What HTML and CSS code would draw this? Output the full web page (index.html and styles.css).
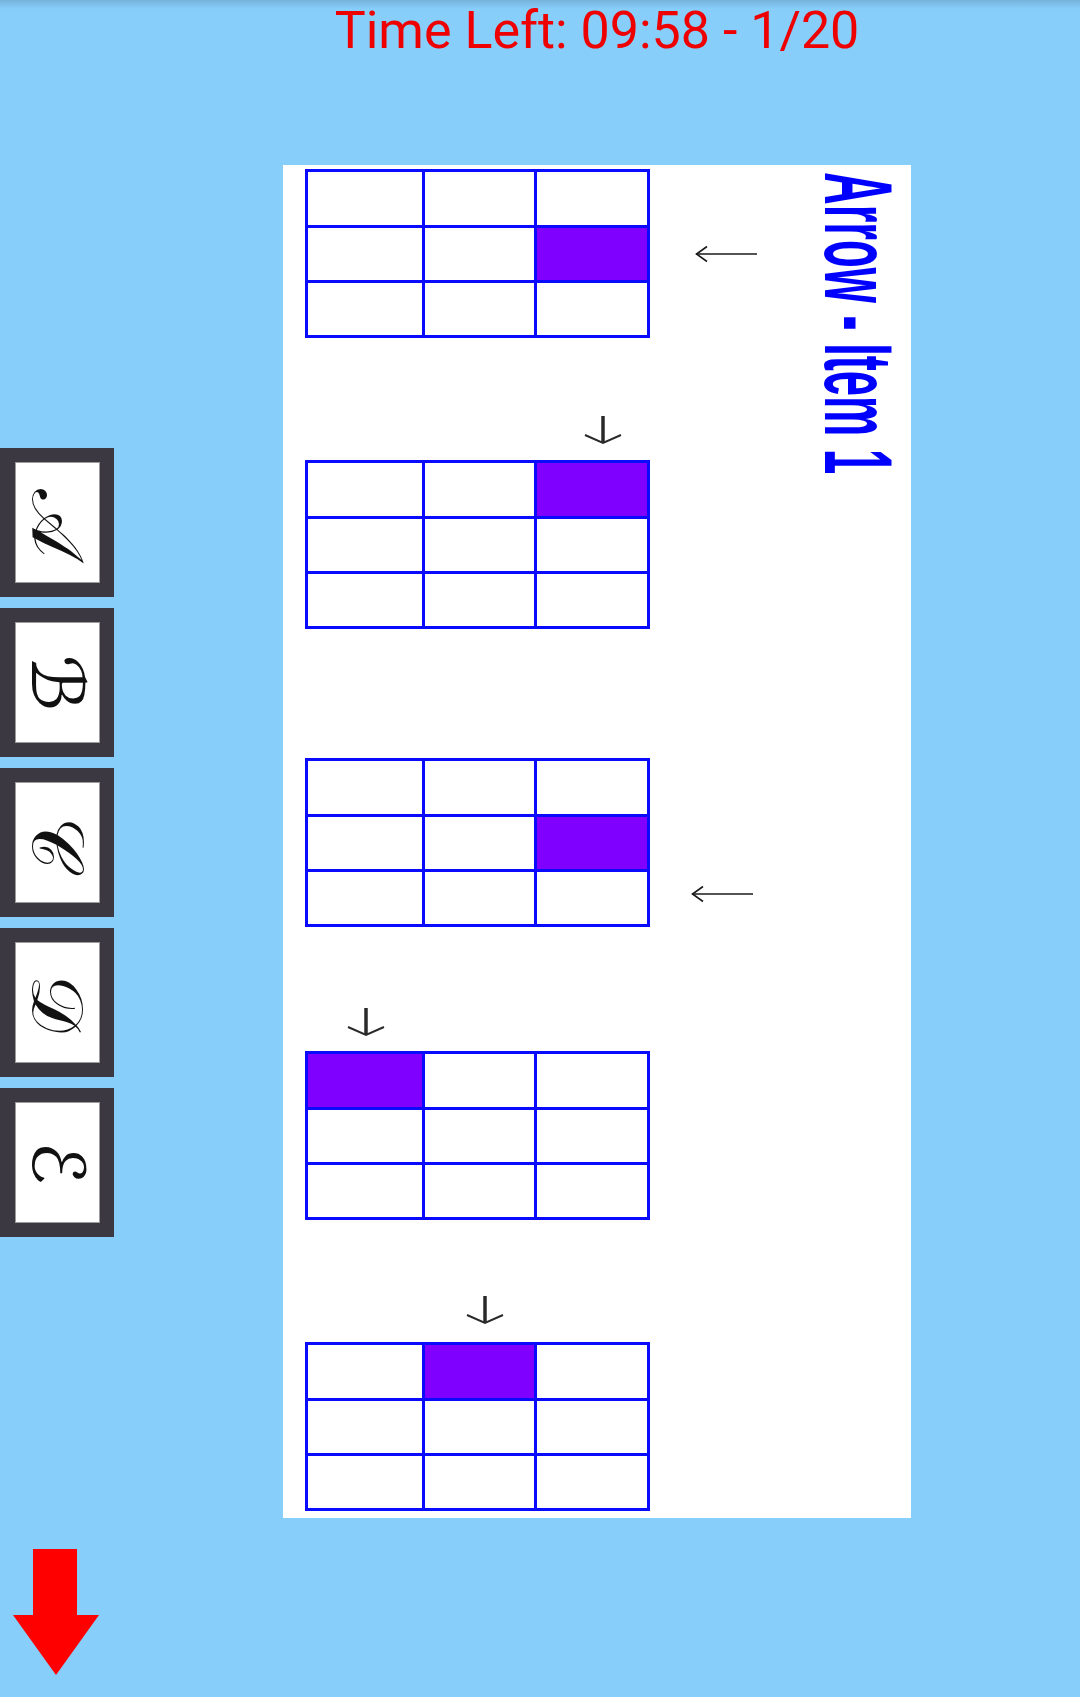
FILE: index.html
```
<!DOCTYPE html>
<html lang="en">
<head>
<meta charset="utf-8">
<title>Arrow - Item 1</title>
<link rel="stylesheet" href="styles.css">
</head>
<body>
<div class="app">
  <aside class="side">
    <div class="choices">
      <div class="choice"><div class="choice-face"><span class="glyph">𝒜</span></div></div>
      <div class="choice"><div class="choice-face"><span class="glyph">ℬ</span></div></div>
      <div class="choice"><div class="choice-face"><span class="glyph">𝒞</span></div></div>
      <div class="choice"><div class="choice-face"><span class="glyph">𝒟</span></div></div>
      <div class="choice"><div class="choice-face"><span class="glyph">ℰ</span></div></div>
    </div>
    <svg class="next" width="86" height="126" viewBox="0 0 86 126">
      <polygon points="20,0 64,0 64,66 86,66 43,126 0,66 20,66" fill="#ff0000"/>
    </svg>
  </aside>
  <main class="main">
    <div class="timer">Time Left: 09:58 - 1/20</div>
    <div class="panel">
      <div class="panel-title">Arrow - Item 1</div>
      <div class="items">
        <div class="item">
          <div class="grid">
            <div class="cell"></div><div class="cell"></div><div class="cell"></div>
            <div class="cell"></div><div class="cell"></div><div class="cell on"></div>
            <div class="cell"></div><div class="cell"></div><div class="cell"></div>
          </div>
          <svg class="arrow arrow-left a1" viewBox="0 0 62 18"><line x1="1" y1="9" x2="62" y2="9"/><polyline points="12,1.5 1.5,9 12,16.5"/></svg>
        </div>
        <div class="item">
          <div class="grid">
            <div class="cell"></div><div class="cell"></div><div class="cell on"></div>
            <div class="cell"></div><div class="cell"></div><div class="cell"></div>
            <div class="cell"></div><div class="cell"></div><div class="cell"></div>
          </div>
          <svg class="arrow arrow-down a2" viewBox="0 0 38 28"><line class="stem" x1="19" y1="0" x2="19" y2="27"/><polyline points="1,19 19,27 37,19"/></svg>
        </div>
        <div class="item item-wide">
          <div class="grid">
            <div class="cell"></div><div class="cell"></div><div class="cell"></div>
            <div class="cell"></div><div class="cell"></div><div class="cell on"></div>
            <div class="cell"></div><div class="cell"></div><div class="cell"></div>
          </div>
          <svg class="arrow arrow-left a3" viewBox="0 0 62 18"><line x1="1" y1="9" x2="62" y2="9"/><polyline points="12,1.5 1.5,9 12,16.5"/></svg>
        </div>
        <div class="item item-mid">
          <div class="grid">
            <div class="cell on"></div><div class="cell"></div><div class="cell"></div>
            <div class="cell"></div><div class="cell"></div><div class="cell"></div>
            <div class="cell"></div><div class="cell"></div><div class="cell"></div>
          </div>
          <svg class="arrow arrow-down a4" viewBox="0 0 38 28"><line class="stem" x1="19" y1="0" x2="19" y2="27"/><polyline points="1,19 19,27 37,19"/></svg>
        </div>
        <div class="item">
          <div class="grid">
            <div class="cell"></div><div class="cell on"></div><div class="cell"></div>
            <div class="cell"></div><div class="cell"></div><div class="cell"></div>
            <div class="cell"></div><div class="cell"></div><div class="cell"></div>
          </div>
          <svg class="arrow arrow-down a5" viewBox="0 0 38 28"><line class="stem" x1="19" y1="0" x2="19" y2="27"/><polyline points="1,19 19,27 37,19"/></svg>
        </div>
      </div>
    </div>
  </main>
</div>
</body>
</html>
```
FILE: styles.css
```
* { box-sizing: border-box; }
html, body { margin: 0; padding: 0; }
body {
  width: 1080px;
  height: 1697px;
  overflow: hidden;
  background: linear-gradient(to bottom, #76b2da 0, #87cefa 9px) #87cefa;
  font-family: Roboto, "Liberation Sans", sans-serif;
}
.app { display: flex; height: 1697px; }

.side {
  width: 114px;
  flex: none;
  display: flex;
  flex-direction: column;
  padding-top: 448px;
}
.choices { display: flex; flex-direction: column; gap: 11px; }
.choice {
  height: 149px;
  background: #3c3842;
  padding: 14px 0 0 15px;
}
.choice-face {
  width: 85px;
  height: 121px;
  background: #fff;
  border: 1px solid #9b9b9b;
  display: flex;
  align-items: center;
  justify-content: center;
  overflow: hidden;
}
.glyph {
  display: inline-block;
  transform: rotate(90deg);
  font-family: "DejaVu Serif", "DejaVu Sans", serif;
  font-size: 72px;
  line-height: 1;
  color: #111;
}
.next { display: block; margin: auto 0 22px 13px; }

.main {
  flex: 1;
  display: flex;
  flex-direction: column;
  align-items: center;
}
.timer {
  font-size: 52px;
  line-height: 52px;
  padding-top: 5px;
  color: #ee0000;
  white-space: nowrap;
}
.panel {
  margin-top: 108px;
  width: 628px;
  height: 1353px;
  background: #fff;
  position: relative;
}
.panel-title {
  position: absolute;
  left: 623px;
  top: 7px;
  transform-origin: 0 0;
  transform: rotate(90deg) scaleX(0.472);
  font: bold 96px/1 "Liberation Sans", Arial, sans-serif;
  color: #0000ff;
  white-space: nowrap;
}
.items {
  display: flex;
  flex-direction: column;
  padding: 4px 0 0 22px;
}
.item { position: relative; width: 345px; }
.item + .item { margin-top: 122px; }
.item + .item-wide { margin-top: 129px; }
.item + .item-mid { margin-top: 124px; }
.grid {
  display: grid;
  grid-template-columns: 114px 109px 110px;
  grid-template-rows: 53px 52px 52px;
  gap: 3px;
  padding: 3px;
  background: #0a0aff;
  width: 345px;
}
.cell { background: #fff; }
.cell.on { background: #7f00ff; }

.arrow { position: absolute; overflow: visible; fill: none; }
.arrow-left { width: 62px; height: 18px; stroke: #1a1a1a; stroke-width: 1.6; }
.arrow-down { width: 38px; height: 28px; stroke: #2a2a2a; stroke-width: 2; }
.arrow-down .stem { stroke-width: 3.5; }
.a1 { left: 390px; top: 76px; }
.a2 { left: 279px; top: -44px; }
.a3 { left: 386px; top: 127px; }
.a4 { left: 42px; top: -43px; }
.a5 { left: 161px; top: -46px; }
```
